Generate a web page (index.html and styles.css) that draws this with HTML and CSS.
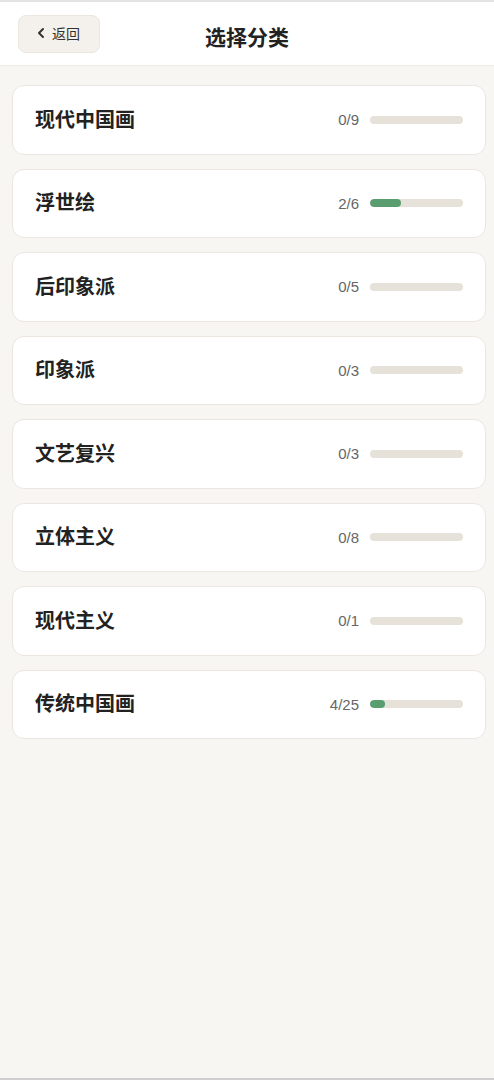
FILE: index.html
```html
<!DOCTYPE html>
<html lang="zh">
<head>
<meta charset="utf-8">
<title>选择分类</title>
<link rel="stylesheet" href="styles.css">
</head>
<body>
<div class="page">
  <header class="header">
    <button class="back"><svg class="chev" width="10" height="12" viewBox="0 0 10 12"><path d="M7 2 L3 6 L7 10" fill="none" stroke="#333" stroke-width="2" stroke-linecap="round" stroke-linejoin="round"/></svg><span>返回</span></button>
    <h1 class="title">选择分类</h1>
  </header>
  <main class="list">
    <div class="card"><span class="name">现代中国画</span><div class="prog"><span class="count">0/9</span><div class="bar"><div class="fill" style="width:0%"></div></div></div></div>
    <div class="card"><span class="name">浮世绘</span><div class="prog"><span class="count">2/6</span><div class="bar"><div class="fill" style="width:33.3%"></div></div></div></div>
    <div class="card"><span class="name">后印象派</span><div class="prog"><span class="count">0/5</span><div class="bar"><div class="fill" style="width:0%"></div></div></div></div>
    <div class="card"><span class="name">印象派</span><div class="prog"><span class="count">0/3</span><div class="bar"><div class="fill" style="width:0%"></div></div></div></div>
    <div class="card"><span class="name">文艺复兴</span><div class="prog"><span class="count">0/3</span><div class="bar"><div class="fill" style="width:0%"></div></div></div></div>
    <div class="card"><span class="name">立体主义</span><div class="prog"><span class="count">0/8</span><div class="bar"><div class="fill" style="width:0%"></div></div></div></div>
    <div class="card"><span class="name">现代主义</span><div class="prog"><span class="count">0/1</span><div class="bar"><div class="fill" style="width:0%"></div></div></div></div>
    <div class="card"><span class="name">传统中国画</span><div class="prog"><span class="count">4/25</span><div class="bar"><div class="fill" style="width:16%"></div></div></div></div>
  </main>
</div>
</body>
</html>
```

FILE: styles.css
```css
* { box-sizing: border-box; }
html, body { margin: 0; padding: 0; }
body {
  background: #f8f6f2;
  font-family: "Liberation Sans", "Noto Sans CJK SC", sans-serif;
  color: #222;
}
.page {
  min-height: 1080px;
  border-top: 2px solid #e4e4e6;
  border-bottom: 2px solid #cfcfcf;
  display: flex;
  flex-direction: column;
}
.header {
  height: 64px;
  background: #fff;
  border-bottom: 1px solid #f0ece6;
  display: flex;
  align-items: center;
  justify-content: center;
  position: relative;
}
.back {
  position: absolute;
  left: 18px;
  top: 13px;
  width: 82px;
  height: 38px;
  border: 1px solid #ebe6df;
  border-radius: 8px;
  background: #f4f0eb;
  display: flex;
  align-items: center;
  justify-content: center;
  gap: 6px;
  font-family: "Noto Sans CJK SC", sans-serif;
  font-size: 14px;
  color: #333;
  padding: 0 2px 2px 0;
}
.chev { display: block; }
.title {
  margin: 4px 0 0 0;
  font-family: "Noto Sans CJK SC", sans-serif;
  font-size: 21px;
  font-weight: 700;
  color: #222;
}
.list {
  padding: 19px 8px 0 12px;
  display: flex;
  flex-direction: column;
  gap: 14px;
}
.card {
  height: 69.5px;
  background: #fff;
  border: 1px solid #ebe6df;
  border-radius: 12px;
  display: flex;
  align-items: center;
  justify-content: space-between;
  padding: 0 22px 0 22px;
}
.name {
  font-family: "Noto Sans CJK SC", sans-serif;
  font-size: 20px;
  font-weight: 700;
  color: #222;
  margin-bottom: 3px;
}
.prog {
  display: flex;
  align-items: center;
  gap: 11px;
}
.count {
  font-size: 15px;
  color: #666;
}
.bar {
  width: 93px;
  height: 8px;
  border-radius: 4px;
  background: #e6e1d9;
  overflow: hidden;
}
.fill {
  height: 100%;
  background: #5a9e6f;
  border-radius: 4px;
}
```
